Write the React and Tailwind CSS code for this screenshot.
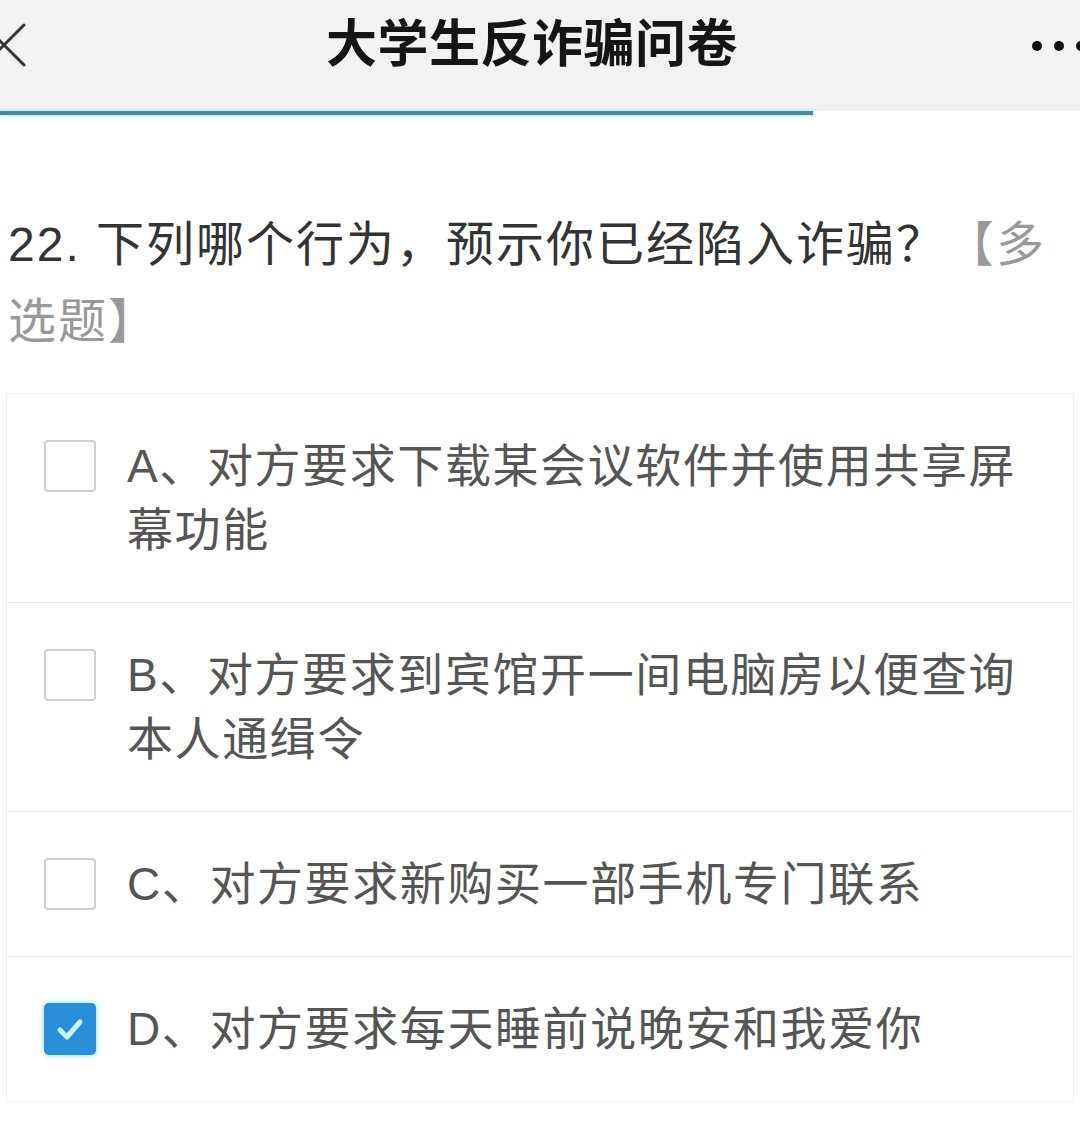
import React from "react";

const FONT = { fontFamily: '"Liberation Sans", "Noto Sans CJK SC", sans-serif' };

function Checkbox({ checked }) {
  if (checked) {
    return (
      <div className="mt-[6px] w-[52px] h-[52px] shrink-0 rounded-[5px] bg-[#2b8fd8] flex items-center justify-center shadow-[0_0_4px_1px_#8fe8fb]">
        <svg width="34" height="34" viewBox="0 0 34 34" fill="none">
          <path d="M7 18 L14 25 L27 10" stroke="#c9f5ff" strokeWidth="5" strokeLinecap="round" strokeLinejoin="round" />
        </svg>
      </div>
    );
  }
  return <div className="mt-[6px] w-[52px] h-[52px] shrink-0 rounded-[4px] border-2 border-[#d0d0d0] bg-white" />;
}

function Option({ text, checked, last }) {
  return (
    <div className={"flex items-start pl-[37px] pr-[35px] py-[40px] " + (last ? "" : "border-b border-[#ececec]")}>
      <Checkbox checked={checked} />
      <div className="ml-[31px] flex-1 text-[46px] leading-[64px] tracking-[1.6px] text-[#555]">{text}</div>
    </div>
  );
}

export default function App() {
  const options = [
    { text: "A、对方要求下载某会议软件并使用共享屏幕功能" },
    { text: "B、对方要求到宾馆开一间电脑房以便查询本人通缉令" },
    { text: "C、对方要求新购买一部手机专门联系" },
    { text: "D、对方要求每天睡前说晚安和我爱你", checked: true },
  ];
  return (
    <div className="w-[1080px] h-[1142px] bg-white overflow-hidden" style={FONT}>
      <div className="bg-[#f2f2f2] h-[111px]">
        <div className="h-[90px] flex items-center justify-between">
          <svg className="-ml-[18px] shrink-0" width="44" height="44" viewBox="0 0 44 44" fill="none">
            <path d="M2 2 L42 42 M42 2 L2 42" stroke="#333" strokeWidth="3" strokeLinecap="round" />
          </svg>
          <div className="text-[51px] leading-[60px] font-bold tracking-[0.5px] text-[#151515] pl-[6px]">大学生反诈骗问卷</div>
          <div className="flex gap-[12px] -mr-[6px] mt-[2px]">
            <div className="w-[10px] h-[10px] rounded-full bg-[#111]" />
            <div className="w-[10px] h-[10px] rounded-full bg-[#111]" />
            <div className="w-[10px] h-[10px] rounded-full bg-[#111]" />
          </div>
        </div>
      </div>
      <div className="h-[5px] bg-white">
        <div className="w-[813px] h-[4px] bg-[#4f8891] shadow-[0_0_3px_1px_#a9eef6]" />
      </div>
      <div className="pt-[90px] pl-[8px] pr-[10px] text-[48px] leading-[77px] tracking-[2px] text-[#333]">
        22. 下列哪个行为，预示你已经陷入诈骗？<span className="text-[#999]">【多选题】</span>
      </div>
      <div className="mt-[33px] mx-[6px] border border-[#eeeeee] border-b-[#f2f2f2]">
        {options.map((o, i) => (
          <Option key={i} text={o.text} checked={o.checked} last={i === options.length - 1} />
        ))}
      </div>
    </div>
  );
}
